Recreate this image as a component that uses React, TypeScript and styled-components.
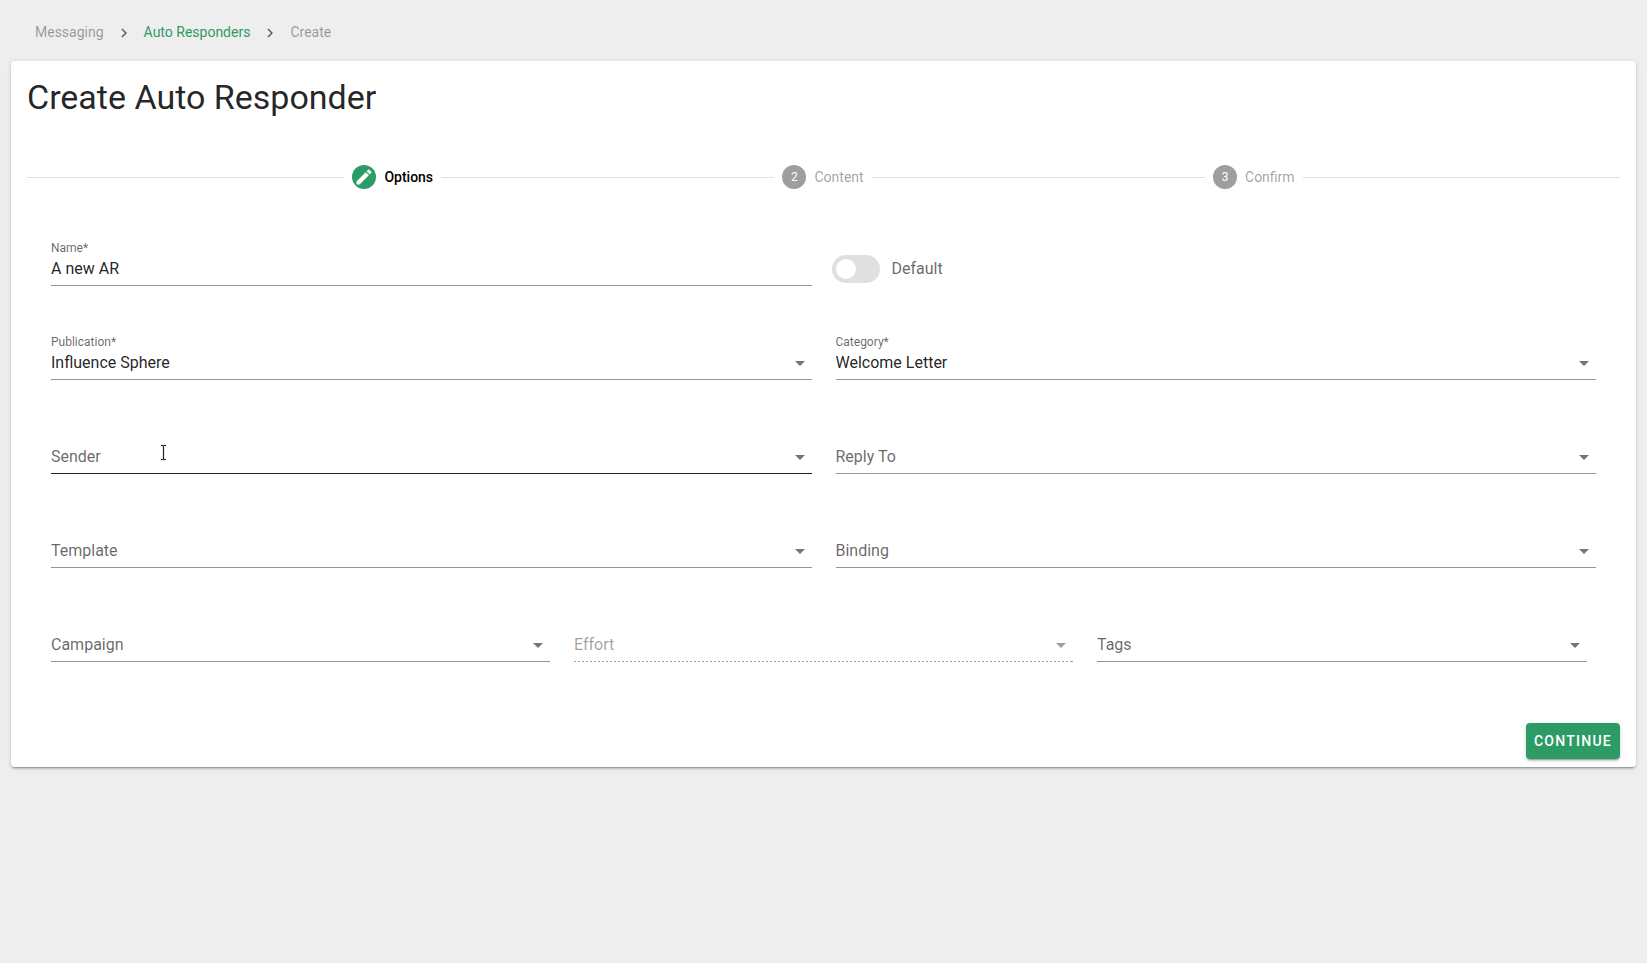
import React, { useId, useState } from 'react';
import styled, { createGlobalStyle, css } from 'styled-components';

const green = '#2d9b66';
const textPrimary = 'rgba(0, 0, 0, 0.87)';
const textSecondary = 'rgba(0, 0, 0, 0.6)';
const textDisabled = 'rgba(0, 0, 0, 0.38)';
const lineColor = 'rgba(0, 0, 0, 0.42)';

const GlobalStyle = createGlobalStyle`
  *, *::before, *::after { box-sizing: border-box; }
  body {
    margin: 0;
    background: #eeeeee;
    color: ${textPrimary};
    font-family: Roboto, sans-serif;
    font-size: 16px;
    line-height: 24px;
  }
  input, select, button { font: inherit; color: inherit; }
`;

const Page = styled.div`
  min-height: 100vh;
  padding: 0 11px 24px;
`;

const Breadcrumbs = styled.nav`
  display: flex;
  align-items: center;
  height: 61px;
  padding: 2px 24px 0;
  font-size: 14px;
  color: ${textDisabled};
`;

const CrumbLink = styled.a`
  color: ${green};
  text-decoration: none;
`;

const CrumbIcon = styled.svg`
  width: 18px;
  height: 18px;
  margin: 2px 11px 0;
  fill: ${textSecondary};
`;

const Card = styled.main`
  padding: 16px 16px 8px;
  background: #fff;
  border-radius: 4px;
  box-shadow: 0 3px 1px -2px rgba(0, 0, 0, 0.2), 0 2px 2px 0 rgba(0, 0, 0, 0.14),
    0 1px 5px 0 rgba(0, 0, 0, 0.12);
`;

const Title = styled.h1`
  margin: 0;
  font-size: 34px;
  font-weight: 400;
  line-height: 40px;
`;

const Stepper = styled.ol`
  display: flex;
  align-items: center;
  height: 72px;
  margin: 24px 0 0;
  padding: 0;
  list-style: none;

  &::before, &::after {
    content: '';
    flex: 1 1 0;
    height: 1px;
    background: rgba(0, 0, 0, 0.12);
  }
`;

const StepLine = styled.li`
  flex: 1 1 16px;
  height: 1px;
  background: rgba(0, 0, 0, 0.12);
`;

const StepItem = styled.li<{ $active?: boolean }>`
  display: flex;
  align-items: center;
  gap: 8px;
  padding: 0 8px;
  font-size: 14px;
  color: ${(p) => (p.$active ? '#000' : textDisabled)};
  font-weight: ${(p) => (p.$active ? 500 : 400)};
`;

const StepDot = styled.span<{ $active?: boolean }>`
  display: flex;
  align-items: center;
  justify-content: center;
  width: 24px;
  height: 24px;
  border-radius: 50%;
  background: ${(p) => (p.$active ? green : '#9e9e9e')};
  color: #fff;
  font-size: 12px;

  svg { width: 20px; height: 20px; fill: #fff; }
`;

const Form = styled.form`
  display: flex;
  flex-direction: column;
`;

const Rows = styled.div`
  display: flex;
  flex-direction: column;
  gap: 48px;
  padding: 27px 24px 0;
`;

const Row = styled.div<{ $cols: number }>`
  display: grid;
  grid-template-columns: repeat(${(p) => p.$cols}, minmax(0, 1fr));
  gap: 24px;
`;

const FieldBox = styled.div<{ $inset?: boolean }>`
  position: relative;
  height: 46px;
  padding-top: 16px;
  margin-right: ${(p) => (p.$inset ? 9 : 0)}px;
`;

const FieldLabel = styled.label<{ $floating: boolean; $disabled?: boolean }>`
  position: absolute;
  left: 0;
  top: ${(p) => (p.$floating ? 0 : 17)}px;
  font-size: ${(p) => (p.$floating ? 12 : 16)}px;
  line-height: ${(p) => (p.$floating ? 16 : 24)}px;
  color: ${(p) => (p.$disabled ? textDisabled : textSecondary)};
  pointer-events: none;
`;

const control = css`
  display: block;
  width: 100%;
  height: 30px;
  margin: 0;
  padding: 0 0 4px;
  border: 0;
  border-bottom: 1px solid ${lineColor};
  border-radius: 0;
  background: transparent;
  outline: none;
  color: ${textPrimary};

  &:hover, &:focus { border-bottom-color: ${textPrimary}; }
`;

const TextInput = styled.input`
  ${control}
`;

const Select = styled.select<{ $highlighted?: boolean }>`
  ${control}
  appearance: none;
  padding-right: 32px;
  ${(p) => p.$highlighted && `border-bottom-color: ${textPrimary};`}

  &:disabled {
    opacity: 1;
    border-image: repeating-linear-gradient(
      to right, ${textDisabled} 0, ${textDisabled} 2px, transparent 2px, transparent 4px
    ) 1 repeat;
  }
`;

const Arrow = styled.svg<{ $disabled?: boolean }>`
  position: absolute;
  right: 0;
  bottom: 5px;
  width: 24px;
  height: 24px;
  fill: ${(p) => (p.$disabled ? textDisabled : 'rgba(0, 0, 0, 0.54)')};
  pointer-events: none;
`;

const Pointer = styled.svg`
  position: absolute;
  left: 107px;
  top: 15px;
  width: 11px;
  height: 20px;
  pointer-events: none;
`;

const SwitchLabel = styled.label`
  display: flex;
  align-items: center;
  gap: 12px;
  height: 28px;
  margin: 15px -4px 0;
  color: ${textSecondary};
`;

const SwitchInput = styled.input`
  appearance: none;
  display: flex;
  align-items: center;
  width: 48px;
  height: 28px;
  margin: 0;
  padding: 4px;
  border-radius: 14px;
  background: #e0e0e0;

  &::before {
    content: '';
    width: 20px;
    height: 20px;
    border-radius: 50%;
    background: #fff;
  }
  &:checked { background: ${green}; justify-content: flex-end; }
`;

const Actions = styled.div`
  display: flex;
  justify-content: flex-end;
  margin-top: 61px;
`;

const PrimaryButton = styled.button`
  height: 36px;
  padding: 0 8px;
  border: 0;
  border-radius: 4px;
  background: ${green};
  color: #fff;
  font-size: 14px;
  font-weight: 500;
  letter-spacing: 0.09em;
  text-transform: uppercase;
  box-shadow: 0 3px 1px -2px rgba(0, 0, 0, 0.2), 0 2px 2px 0 rgba(0, 0, 0, 0.14),
    0 1px 5px 0 rgba(0, 0, 0, 0.12);
`;

const Chevron = () => (
  <CrumbIcon viewBox="0 0 24 24" aria-hidden="true">
    <path d="M8.59 16.58 13.17 12 8.59 7.41 10 6l6 6-6 6-1.41-1.42z" />
  </CrumbIcon>
);

const TextCursor = () => (
  <Pointer viewBox="0 0 11 20" aria-hidden="true" fill="none">
    <path
      d="M3 2.5h2l.5.5.5-.5h2M5.5 2.5v14M3 16.5h2l.5-.5.5.5h2"
      stroke="#000"
      strokeOpacity="0.1"
      strokeWidth="3"
    />
    <path d="M3 2.5h2l.5.5.5-.5h2M5.5 2.5v14M3 16.5h2l.5-.5.5.5h2" stroke="#222" />
  </Pointer>
);

type SelectFieldProps = {
  label: string;
  options?: string[];
  initial?: string;
  disabled?: boolean;
  highlighted?: boolean;
  inset?: boolean;
  children?: React.ReactNode;
};

function SelectField({
  label,
  options = [],
  initial = '',
  disabled,
  highlighted,
  inset,
  children,
}: SelectFieldProps) {
  const id = useId();
  const [value, setValue] = useState(initial);
  return (
    <FieldBox $inset={inset}>
      <Select
        id={id}
        value={value}
        disabled={disabled}
        $highlighted={highlighted}
        onChange={(e) => setValue(e.target.value)}
      >
        <option value="" />
        {options.map((o) => (
          <option key={o}>{o}</option>
        ))}
      </Select>
      <FieldLabel htmlFor={id} $floating={value !== ''} $disabled={disabled}>
        {label}
      </FieldLabel>
      <Arrow viewBox="0 0 24 24" $disabled={disabled} aria-hidden="true">
        <path d="M7 10l5 5 5-5H7z" />
      </Arrow>
      {children}
    </FieldBox>
  );
}

export default function App() {
  const [name, setName] = useState('A new AR');
  return (
    <>
      <GlobalStyle />
      <Page>
        <Breadcrumbs aria-label="Breadcrumb">
          <span>Messaging</span>
          <Chevron />
          <CrumbLink href="#auto-responders">Auto Responders</CrumbLink>
          <Chevron />
          <span aria-current="page">Create</span>
        </Breadcrumbs>
        <Card>
          <Title>Create Auto Responder</Title>
          <Stepper>
            <StepItem $active aria-current="step">
              <StepDot $active>
                <svg viewBox="0 0 24 24" aria-hidden="true">
                  <path d="M20.71 7.04c.39-.39.39-1.04 0-1.41l-2.34-2.34c-.37-.39-1.02-.39-1.41 0l-1.84 1.83 3.75 3.75M3 17.25V21h3.75L17.81 9.93l-3.75-3.75L3 17.25z" />
                </svg>
              </StepDot>
              Options
            </StepItem>
            <StepLine aria-hidden="true" />
            <StepItem>
              <StepDot>2</StepDot>
              Content
            </StepItem>
            <StepLine aria-hidden="true" />
            <StepItem>
              <StepDot>3</StepDot>
              Confirm
            </StepItem>
          </Stepper>
          <Form onSubmit={(e) => e.preventDefault()}>
            <Rows>
              <Row $cols={2}>
                <FieldBox>
                  <TextInput id="name" value={name} onChange={(e) => setName(e.target.value)} />
                  <FieldLabel htmlFor="name" $floating>
                    Name*
                  </FieldLabel>
                </FieldBox>
                <SwitchLabel>
                  <SwitchInput type="checkbox" role="switch" />
                  Default
                </SwitchLabel>
              </Row>
              <Row $cols={2}>
                <SelectField
                  label="Publication*"
                  options={['Influence Sphere']}
                  initial="Influence Sphere"
                />
                <SelectField
                  label="Category*"
                  options={['Welcome Letter']}
                  initial="Welcome Letter"
                />
              </Row>
              <Row $cols={2}>
                <SelectField label="Sender" highlighted>
                  <TextCursor />
                </SelectField>
                <SelectField label="Reply To" />
              </Row>
              <Row $cols={2}>
                <SelectField label="Template" />
                <SelectField label="Binding" />
              </Row>
              <Row $cols={3}>
                <SelectField label="Campaign" />
                <SelectField label="Effort" disabled />
                <SelectField label="Tags" inset />
              </Row>
            </Rows>
            <Actions>
              <PrimaryButton type="submit">Continue</PrimaryButton>
            </Actions>
          </Form>
        </Card>
      </Page>
    </>
  );
}
